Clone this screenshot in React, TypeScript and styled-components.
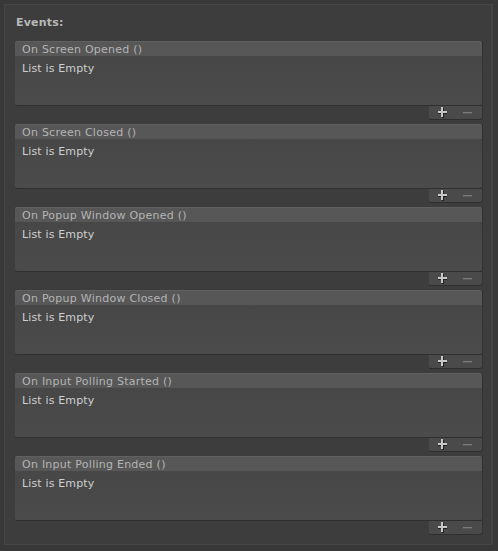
import styled, { createGlobalStyle } from 'styled-components';

const GlobalStyle = createGlobalStyle`
  html, body {
    margin: 0;
    padding: 0;
    background: #383838;
    font-family: 'DejaVu Sans', 'Liberation Sans', sans-serif;
  }
`;

const Panel = styled.div`
  margin: 4px 4px 4px 4px;
  width: 489px;
  height: 541px;
  box-sizing: border-box;
  background: #3d3d3d;
  border: 1px solid #464646;
  border-right: 2px solid #444444;
  padding: 9px 10px 0 10px;
`;

const Title = styled.div`
  font-size: 11px;
  font-weight: bold;
  color: #b8b8b8;
  height: 27px;
  line-height: 18px;
  padding-left: 1px;
  letter-spacing: 0.2px;
`;

const EventBlock = styled.div`
  display: flex;
  flex-direction: column;
  width: 467px;
  margin-bottom: 4px;
`;

const Header = styled.div`
  height: 16px;
  box-sizing: border-box;
  background: #575757;
  border-top: 1px solid #606060;
  border-bottom: 1px solid #474747;
  border-radius: 2px 2px 0 0;
  box-shadow: 1px 0 0 #2f2f2f;
  color: #b4b4b4;
  font-size: 11px;
  line-height: 15px;
  letter-spacing: 0.25px;
  padding-left: 7px;
`;

const Body = styled.div`
  height: 49px;
  box-sizing: border-box;
  background: linear-gradient(#474747, #4b4b4b);
  border-bottom: 1px solid #2f2f2f;
  box-shadow: 1px 0 0 #333333;
  border-radius: 0 0 2px 2px;
  color: #cfcfcf;
  font-size: 11px;
  padding: 5px 0 0 7px;
  line-height: 14px;
  letter-spacing: 0.15px;
`;

const Footer = styled.div`
  align-self: flex-end;
  width: 54px;
  height: 14px;
  box-sizing: border-box;
  background: #4a4a4a;
  border-bottom: 1px solid #2e2e2e;
  border-left: 1px solid #3e3e3e;
  border-radius: 0 0 3px 3px;
  box-shadow: 1px 0 0 #333333;
  display: flex;
  align-items: center;
  justify-content: space-between;
  padding: 0 9px 0 8px;
`;

const Tool = styled.svg`
  display: block;
`;

function Plus() {
  return (
    <Tool width="11" height="11" viewBox="0 0 11 11">
      <rect x="1" y="5" width="9" height="2" fill="#222" />
      <rect x="5" y="1" width="2" height="10" fill="#222" />
      <rect x="1" y="4" width="9" height="2" fill="#c8c8c8" />
      <rect x="4" y="0" width="2" height="10" fill="#c8c8c8" />
    </Tool>
  );
}

function Minus() {
  return (
    <Tool width="11" height="11" viewBox="0 0 11 11">
      <rect x="1" y="5" width="9" height="2" fill="#7b7b7b" />
      <rect x="1" y="6" width="9" height="1" fill="#5a5a5a" />
    </Tool>
  );
}

const events = [
  'On Screen Opened ()',
  'On Screen Closed ()',
  'On Popup Window Opened ()',
  'On Popup Window Closed ()',
  'On Input Polling Started ()',
  'On Input Polling Ended ()',
];

export default function App() {
  return (
    <>
      <GlobalStyle />
      <Panel>
        <Title>Events:</Title>
        {events.map((name) => (
          <EventBlock key={name}>
            <Header>{name}</Header>
            <Body>List is Empty</Body>
            <Footer>
              <Plus />
              <Minus />
            </Footer>
          </EventBlock>
        ))}
      </Panel>
    </>
  );
}
